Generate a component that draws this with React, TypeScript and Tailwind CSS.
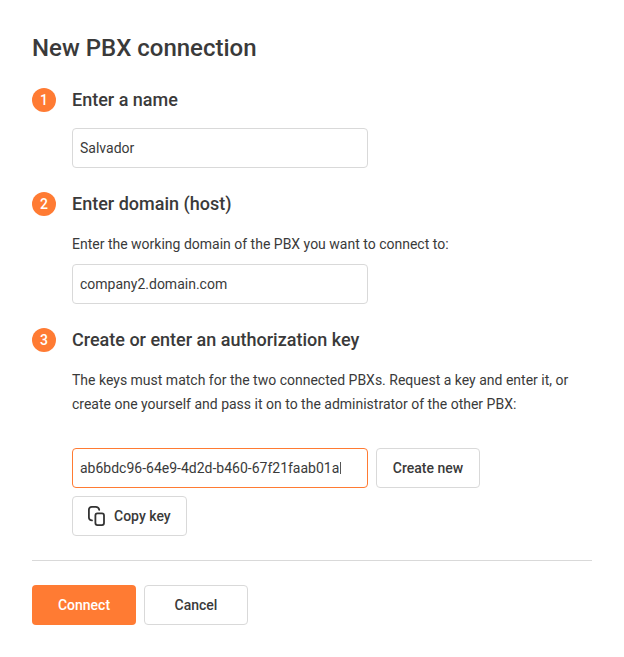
import React from 'react';

const Step = ({ n, title }: { n: number; title: string }) => (
  <div className="flex items-center h-6">
    <div className="w-6 h-6 rounded-full bg-[#ff7b33] text-white text-[14px] font-medium flex items-center justify-center">{n}</div>
    <h2 className="ml-4 text-[18px] leading-6 font-medium text-[#3a3a3a]">{title}</h2>
  </div>
);

const fieldClass =
  'h-10 w-[296px] rounded border border-[#d9d9d9] px-[7px] flex items-center text-[14px] text-[#3a3a3a] bg-white';

const btnClass =
  'h-10 rounded border border-[#d9d9d9] bg-white text-[14px] font-medium text-[#3a3a3a] flex items-center justify-center';

const CopyIcon = () => (
  <svg width="17" height="20" viewBox="0 0 17 20" fill="none" stroke="#333333" strokeWidth="1.8" strokeLinecap="round" strokeLinejoin="round">
    <rect x="7.4" y="7.4" width="8.6" height="11.7" rx="2" />
    <path d="M4 14.4 C2 14.4 0.9 13.3 0.9 11.6 V3.7 C0.9 2 2 0.9 3.8 0.9 H7.6 C9.6 0.9 10.9 2 11.2 3.8" />
  </svg>
);

export default function App() {
  return (
    <div className="w-[624px] h-[657px] bg-white px-8 pt-[32px] font-['Roboto',sans-serif] overflow-hidden">
      <h1 className="text-[24px] leading-8 font-medium text-[#3a3a3a]">New PBX connection</h1>

      <div className="mt-6">
        <Step n={1} title="Enter a name" />
        <div className="ml-10 mt-4">
          <div className={fieldClass}>Salvador</div>
        </div>
      </div>

      <div className="mt-6">
        <Step n={2} title="Enter domain (host)" />
        <div className="ml-10 mt-4">
          <p className="text-[14px] leading-6 text-[#3a3a3a]">Enter the working domain of the PBX you want to connect to:</p>
          <div className={`${fieldClass} mt-2`}>company2.domain.com</div>
        </div>
      </div>

      <div className="mt-6">
        <Step n={3} title="Create or enter an authorization key" />
        <div className="ml-10 mt-4">
          <p className="text-[14px] leading-6 text-[#3a3a3a]">
            The keys must match for the two connected PBXs. Request a key and enter it, or
            <br />
            create one yourself and pass it on to the administrator of the other PBX:
          </p>
          <div className="mt-8 flex flex-wrap gap-2">
            <div className="h-10 w-[296px] rounded border border-[#ff7b33] px-[7px] flex items-center text-[14px] text-[#3a3a3a] bg-white">
              ab6bdc96-64e9-4d2d-b460-67f21faab01a<span className="w-px h-3 bg-[#555555] ml-px" />
            </div>
            <button className={`${btnClass} w-[104px]`}>Create new</button>
            <button className={`${btnClass} w-[115px] !justify-start pl-[15px] gap-[9px]`}>
              <CopyIcon />
              Copy key
            </button>
          </div>
        </div>
      </div>

      <div className="mt-6 border-t border-[#d9d9d9] w-[560px]" />

      <div className="mt-6 flex gap-2">
        <button className="h-10 w-[104px] rounded bg-[#ff7b33] text-white text-[14px] font-medium">Connect</button>
        <button className={`${btnClass} w-[104px]`}>Cancel</button>
      </div>
    </div>
  );
}
